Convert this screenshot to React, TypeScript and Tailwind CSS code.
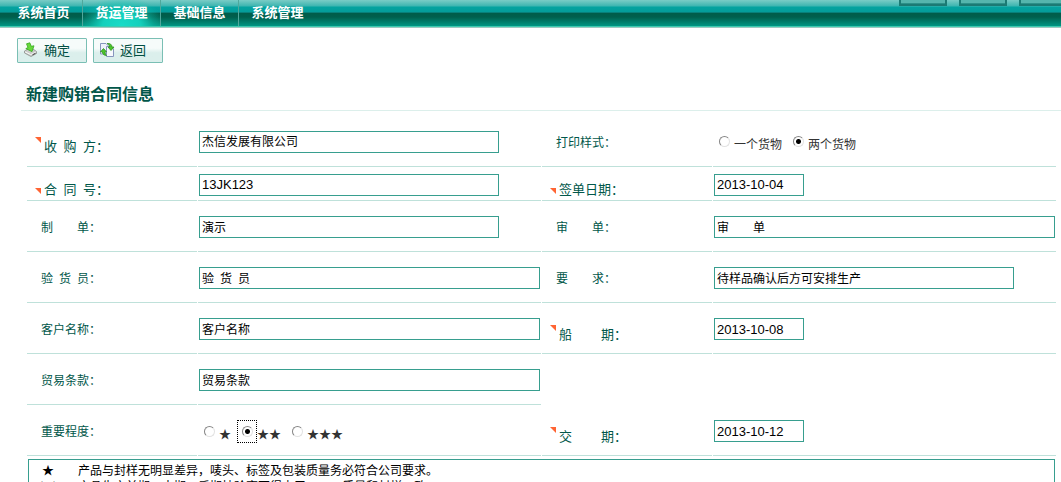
import React from "react";

const FONT = "font-['Noto_Sans_CJK_SC',sans-serif]";

const NAV = ["系统首页", "货运管理", "基础信息", "系统管理"];

function Nav() {
  return (
    <nav
      aria-label="主菜单"
      className="flex h-7 shrink-0 overflow-hidden border-b border-[#9cc9c0] bg-[linear-gradient(to_bottom,#7accc6_0px,#3db5b0_6px,#04a3a0_7px,#049c99_12px,#08807a_12px,#08807a_13px,#005c49_13px,#005f4d_17px,#009683_26px,#3ccab0_26px,#3ccab0_27px)] pl-[5px]"
    >
      {NAV.map((item, i) => (
        <a
          key={item}
          href="#"
          aria-current={i === 1 ? "page" : undefined}
          className={
            "flex h-[26px] w-[78px] shrink-0 items-center justify-center border-r pb-[2px] text-[13px] leading-6 font-bold text-white " +
            (i === 3 ? "border-transparent " : "border-[#4fa89c] ") +
            (i === 1
              ? "bg-[radial-gradient(ellipse_at_bottom,#18dcc8_0%,#14d0bc_35%,#10c4b266_60%,transparent_80%)]"
              : "")
          }
        >
          {item}
        </a>
      ))}
      <div aria-hidden="true" className="-mr-[6px] ml-auto flex gap-3">
        {[0, 1, 2].map((n) => (
          <span
            key={n}
            className="h-[6px] w-12 border-2 border-t-0 border-[#1c7a74] bg-[#55b5ad] shadow-[inset_0_-1px_0_#2c9089]"
          />
        ))}
      </div>
    </nav>
  );
}

function SaveIcon() {
  return (
    <svg viewBox="0 0 16 16" className="size-4" aria-hidden="true">
      <path d="M1.5 9 L5 7 H10 L13.5 9.5 V11.5 L8 14.5 L1.5 11 Z" fill="#c9cbc9" stroke="#8d908d" strokeWidth=".8" />
      <path d="M2 9.8 L7.8 12.6 L13 10" fill="none" stroke="#f6f6f6" />
      <path d="M9.5 12.8 L12.5 11.3" stroke="#444" />
      <path d="M3.5 1.8 L6.8 .8 L8.3 4.3 L11 3.8 L9 9.6 L2.8 6.6 L5 5.6 Z" fill="#66d93c" stroke="#36a820" strokeWidth=".8" />
    </svg>
  );
}

function BackIcon() {
  return (
    <svg viewBox="0 0 16 16" className="size-4" aria-hidden="true">
      <path d="M1.5 1.5 H7 L9 3.5 V12 H1.5 Z" fill="#eef2fb" stroke="#8796bd" />
      <path d="M7.5 4.5 H12 L14.5 7 V14.5 H7.5 Z" fill="#f7f9fe" stroke="#8796bd" />
      <path d="M4.5 6.5 L7.5 9.8 H6 C6 11.5 6.5 12.5 7.5 13.5 C5 13.5 3.4 12 3.3 9.8 H1.5 Z" fill="#4cc52b" stroke="#258a14" strokeWidth=".7" />
      <path d="M8 1.5 C11 1 13 2.5 13 5 H15 L12 8.5 L9 5 H10.7 C10.7 3.6 10 2.4 8 1.5 Z" fill="#4cc52b" stroke="#258a14" strokeWidth=".7" />
    </svg>
  );
}

function ToolButton({ icon, children }: { icon: React.ReactNode; children: React.ReactNode }) {
  return (
    <button
      type="button"
      className="flex h-[25px] w-[70px] items-center gap-[5px] rounded-[1px] border border-[#7abfb4] bg-linear-to-b from-[#f6fbfa] from-40% to-[#dbefec] to-60% pb-px pl-[5px] text-[13px] leading-5 text-[#014f42]"
    >
      {icon}
      {children}
    </button>
  );
}

const CELL = "flex items-center border-b border-[#bfe1da] pt-[2px]";

function Mark({ low }: { low?: boolean }) {
  return (
    <svg viewBox="0 0 6 6" className={low ? "mb-[3px] size-[6px] self-end" : "size-[6px] self-start"} aria-hidden="true">
      <path d="M0 0 H6 V6 Z" fill="#ff6433" />
    </svg>
  );
}

type LabelProps = {
  htmlFor?: string;
  id?: string;
  required?: "high" | "low";
  children: React.ReactNode;
};

function LabelCell({ htmlFor, id, required, children }: LabelProps) {
  if (required) {
    return (
      <div className={CELL + " pl-2"}>
        <label
          htmlFor={htmlFor}
          className="flex gap-[3px] pt-2 text-[13px] whitespace-pre text-[#01574a]"
        >
          <Mark low={required === "low"} />
          <span className={required === "low" ? "leading-4" : "pt-px leading-4"}>{children}</span>
        </label>
      </div>
    );
  }
  const Tag = htmlFor ? "label" : "span";
  return (
    <div className={CELL + " pl-[14px]"}>
      <Tag id={id} {...(htmlFor ? { htmlFor } : {})} className="text-xs whitespace-pre text-[#01574a]">
        {children}
      </Tag>
    </div>
  );
}

function InputCell({ id, value, size }: { id: string; value: string; size: "date" | "medium" | "full" }) {
  const width = size === "date" ? "w-[90px]" : size === "medium" ? "w-[300px]" : "w-full";
  const text = /^[\dA-Z-]+$/.test(value)
    ? "font-['Liberation_Sans',sans-serif] text-[13px]"
    : "text-xs pb-[2px]";
  return (
    <div className={CELL + " px-px"}>
      <input
        id={id}
        type="text"
        defaultValue={value}
        className={"h-[22px] border border-[#379e8f] bg-white px-[2px] text-black outline-none " + width + " " + text}
      />
    </div>
  );
}

function Radio({ name, checked, focused, children }: { name: string; checked?: boolean; focused?: boolean; children: string }) {
  return (
    <label className="flex items-center text-xs text-[#333]">
      <span
        className={
          "flex h-[23px] w-5 items-center justify-center border border-dotted " +
          (focused ? "border-black" : "border-transparent")
        }
      >
        <input
          type="radio"
          name={name}
          defaultChecked={checked}
          className="size-[11px] appearance-none rounded-full border border-[#e2e2e2] border-t-[#858585] border-l-[#858585] bg-white checked:bg-[radial-gradient(circle,#000_0_2px,transparent_3px)]"
        />
      </span>
      <span className="pt-[5px] leading-4">{children}</span>
    </label>
  );
}

const NOTES =
  "\u2002\u2002★\u2002\u2002\u2002\u2002产品与封样无明显差异，唛头、标签及包装质量务必符合公司要求。\n" +
  "\u2002★★\u2002\u2002\u2002产品生产前期、中期、后期抽验率不得少于50%、质量和封样一致";

export default function App() {
  return (
    <div className={"flex h-screen flex-col overflow-hidden bg-white " + FONT}>
      <Nav />
      <main className="min-h-0 flex-1 overflow-hidden">
        <div className="flex gap-[6px] pt-[10px] pl-[17px]">
          <ToolButton icon={<SaveIcon />}>确定</ToolButton>
          <ToolButton icon={<BackIcon />}>返回</ToolButton>
        </div>
        <h1 className="mt-[17px] ml-[21px] border-b border-[#dcefeb] pb-1 pl-[5px] text-base leading-[26px] font-bold text-[#01574a]">
          新建购销合同信息
        </h1>
        <form className="pt-1 pr-[5px] pl-[27px]">
          <div className="grid grid-cols-[170fr_343fr_170fr_343fr] grid-rows-[52px_34px_repeat(5,51px)] gap-x-px">
            <LabelCell htmlFor="buyer" required="high">{"收\u2002购\u2002方："}</LabelCell>
            <InputCell id="buyer" value="杰信发展有限公司" size="medium" />
            <LabelCell id="print-style">打印样式：</LabelCell>
            <div className={CELL + " gap-[6px] pl-px"} role="radiogroup" aria-labelledby="print-style">
              <Radio name="print">一个货物</Radio>
              <Radio name="print" checked>两个货物</Radio>
            </div>

            <LabelCell htmlFor="contract" required="low">{"合\u2002同\u2002号："}</LabelCell>
            <InputCell id="contract" value="13JK123" size="medium" />
            <LabelCell htmlFor="sign-date" required="low">签单日期：</LabelCell>
            <InputCell id="sign-date" value="2013-10-04" size="date" />

            <LabelCell htmlFor="maker">{"制\u2002\u2002\u2002\u2002单："}</LabelCell>
            <InputCell id="maker" value="演示" size="medium" />
            <LabelCell htmlFor="checker">{"审\u2002\u2002\u2002\u2002单："}</LabelCell>
            <InputCell id="checker" value={"审\u2002\u2002\u2002\u2002单"} size="full" />

            <LabelCell htmlFor="inspector">{"验\u2002货\u2002员："}</LabelCell>
            <InputCell id="inspector" value={"验\u2002货\u2002员"} size="full" />
            <LabelCell htmlFor="request">{"要\u2002\u2002\u2002\u2002求："}</LabelCell>
            <InputCell id="request" value="待样品确认后方可安排生产" size="medium" />

            <LabelCell htmlFor="customer">客户名称：</LabelCell>
            <InputCell id="customer" value="客户名称" size="full" />
            <LabelCell htmlFor="ship-date" required="high">{"船\u2002\u2002\u2002\u2002 期："}</LabelCell>
            <InputCell id="ship-date" value="2013-10-08" size="date" />

            <LabelCell htmlFor="terms">贸易条款：</LabelCell>
            <InputCell id="terms" value="贸易条款" size="full" />
            <div className="col-span-2" />

            <LabelCell id="importance">重要程度：</LabelCell>
            <div className={CELL + " gap-[6px] pl-px"} role="radiogroup" aria-labelledby="importance">
              <Radio name="importance">★</Radio>
              <Radio name="importance" checked focused>★★</Radio>
              <Radio name="importance">★★★</Radio>
            </div>
            <LabelCell htmlFor="due-date" required="high">{"交\u2002\u2002\u2002\u2002 期："}</LabelCell>
            <InputCell id="due-date" value="2013-10-12" size="date" />
          </div>
          <div className="px-px pt-[3px]">
            <textarea
              aria-label="备注"
              rows={5}
              defaultValue={NOTES}
              className="block w-full resize-none overflow-hidden border border-[#379e8f] px-px pt-[2px] text-xs leading-4 text-black outline-none"
            />
          </div>
        </form>
      </main>
    </div>
  );
}
